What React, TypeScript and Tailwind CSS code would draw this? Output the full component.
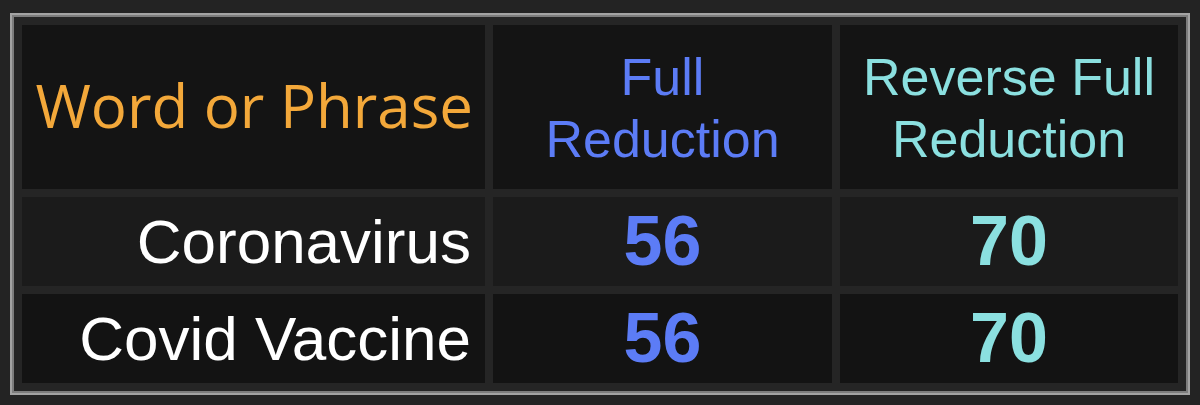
export default function App() {
  const rows = [
    { phrase: 'Coronavirus', full: 56, reverse: 70, bg: 'bg-[#1b1b1b]' },
    { phrase: 'Covid Vaccine', full: 56, reverse: 70, bg: 'bg-[#131313]' },
  ];

  return (
    <div className="min-h-screen w-[1200px] bg-[#232323] pl-[10px] pt-[13px] font-['Liberation_Sans',Arial,sans-serif]">
      <div className="w-[1180px] border-2 border-[#a3a3a3]">
        <div className="border-2 border-[#7d7d7d] bg-[#252525] p-2">
          <div className="grid grid-cols-[463px_339px_338px] grid-rows-[164px_89px_89px] gap-2">
            {/* Header */}
            <div className="flex items-center justify-end bg-[#141414] pr-[12px] pb-[4px]">
              <span className="font-['Open_Sans',sans-serif] text-[60px] font-medium leading-none text-[#f3a83a]">
                Word or Phrase
              </span>
            </div>
            <div className="flex items-center justify-center bg-[#141414] pt-[2px] text-center text-[52px] leading-[62px] text-[#5c7cf6]">
              Full
              <br />
              Reduction
            </div>
            <div className="flex items-center justify-center bg-[#141414] pt-[2px] text-center text-[52px] leading-[62px] text-[#8be0e0]">
              Reverse Full
              <br />
              Reduction
            </div>

            {/* Rows */}
            {rows.map(row => (
              <div key={row.phrase} className="contents">
                <div className={`flex items-center justify-end pr-[14px] text-[62px] text-white ${row.bg}`}>
                  {row.phrase}
                </div>
                <div className={`flex items-center justify-center text-[70px] font-bold text-[#5c7cf6] ${row.bg}`}>
                  {row.full}
                </div>
                <div className={`flex items-center justify-center text-[70px] font-bold text-[#8be0e0] ${row.bg}`}>
                  {row.reverse}
                </div>
              </div>
            ))}
          </div>
        </div>
      </div>
    </div>
  );
}
